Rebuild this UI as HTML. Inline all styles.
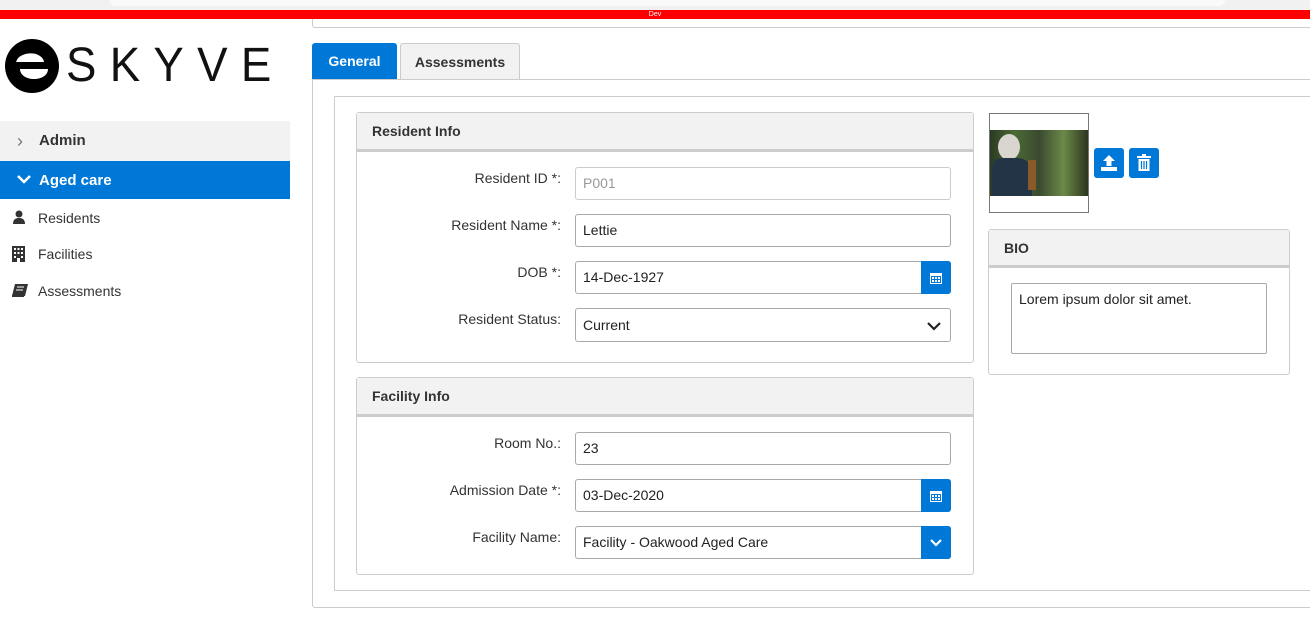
<!DOCTYPE html>
<html><head><meta charset="utf-8"><style>
*{box-sizing:border-box;margin:0;padding:0}
body{width:1310px;height:635px;position:relative;overflow:hidden;background:#fff;font-family:"Liberation Sans",sans-serif;font-size:14px;color:#333}
.a{position:absolute}
.lbl{position:absolute;right:749px;text-align:right;color:#333;font-size:14px}
.inp{position:absolute;left:575px;width:376px;height:33px;border:1px solid #a9a9a9;border-radius:3px;padding:0 7px;line-height:31px;font-size:14px;color:#222;background:#fff}
.btn{position:absolute;right:-1px;top:-1px;width:30px;height:33px;background:#0078d7;border-radius:0 3px 3px 0;display:flex;align-items:center;justify-content:center}
.panel{position:absolute;border:1px solid #ccc;border-radius:3px}
.ph{height:39px;background:#f2f2f2;border-bottom:3px solid #ccc;font-weight:bold;font-size:14px;padding:0 15px;line-height:37px;color:#333}
</style></head><body>
<div class="a" style="left:0;top:0;width:1310px;height:10px;background:#f1f1f1"></div>
<div class="a" style="left:110px;top:0;width:1115px;height:6px;background:#fafafa;border-radius:0 0 6px 6px"></div>
<div class="a" style="left:0;top:10px;width:1310px;height:9px;background:#f00;color:#fff;font-size:7px;line-height:9px;text-align:center">Dev</div>
<div class="a" style="left:312px;top:19px;width:1000px;height:9px;border:1px solid #ccc;border-top:none;border-radius:0 0 3px 3px"></div>

<!-- logo -->
<svg class="a" style="left:4px;top:38px" width="56" height="56" viewBox="0 0 56 56"><circle cx="28" cy="28" r="27" fill="#000"/><path d="M12 26c0-9 12-12 20-10 6 2 8 6 8 8H12z" fill="#fff"/><path d="M16 31h28c0 6-6 10-14 10-8 0-14-4-14-10z" fill="#fff"/><rect x="10" y="26" width="36" height="5" fill="#000"/></svg>
<div class="a" style="left:66px;top:36px;font-size:48px;letter-spacing:14px;font-weight:300;color:#111;line-height:60px;transform:scaleX(.95);transform-origin:left">SKYVE</div>

<div class="a" style="left:0;top:121px;width:290px;height:40px;background:#f2f2f2"></div>
<div class="a" style="left:17px;top:131px;color:#777;font-size:18px;line-height:20px">&#8250;</div>
<div class="a" style="left:39px;top:132px;font-weight:bold;font-size:15px">Admin</div>
<div class="a" style="left:0;top:161px;width:290px;height:38px;background:#0078d7"></div>
<svg class="a" style="left:16px;top:174px" width="16" height="10" viewBox="0 0 16 10"><path d="M2 2l6 6 6-6" stroke="#fff" stroke-width="2.5" fill="none"/></svg>
<div class="a" style="left:39px;top:172px;font-weight:bold;font-size:15px;color:#fff">Aged care</div>
<svg class="a" style="left:12px;top:210px" width="14" height="15" viewBox="0 0 14 15"><circle cx="7" cy="4" r="3.5" fill="#333"/><path d="M1 14c0-5 3-6 6-6s6 1 6 6z" fill="#333"/></svg>
<div class="a" style="left:38px;top:210px">Residents</div>
<svg class="a" style="left:12px;top:246px" width="13" height="16" viewBox="0 0 13 16"><rect width="13" height="16" fill="#333"/><g fill="#fff"><rect x="2" y="2" width="2" height="2"/><rect x="5.5" y="2" width="2" height="2"/><rect x="9" y="2" width="2" height="2"/><rect x="2" y="6" width="2" height="2"/><rect x="5.5" y="6" width="2" height="2"/><rect x="9" y="6" width="2" height="2"/><rect x="2" y="10" width="2" height="2"/><rect x="9" y="10" width="2" height="2"/><rect x="5" y="12" width="3" height="4"/></g></svg>
<div class="a" style="left:38px;top:246px">Facilities</div>
<svg class="a" style="left:11px;top:284px" width="17" height="14" viewBox="0 0 17 14"><path d="M4 0h13l-3 12H1z" fill="#333"/><path d="M1 12h12" stroke="#333" stroke-width="2"/><path d="M6 3h7M5 6h7" stroke="#fff"/></svg>
<div class="a" style="left:38px;top:283px">Assessments</div>

<!-- tabs -->
<div class="a" style="left:312px;top:43px;width:85px;height:37px;background:#0078d7;border-radius:3px 3px 0 0;color:#fff;font-weight:bold;font-size:14px;text-align:center;line-height:37px">General</div>
<div class="a" style="left:400px;top:43px;width:120px;height:37px;background:#f2f2f2;border:1px solid #ccc;border-bottom:1px dotted #333;border-radius:3px 3px 0 0;font-weight:bold;font-size:14px;text-align:center;line-height:36px">Assessments</div>
<div class="a" style="left:312px;top:79px;width:1010px;height:529px;border:1px solid #ccc;border-radius:0 0 3px 3px"></div>
<div class="a" style="left:334px;top:96px;width:990px;height:495px;border:1px solid #ccc"></div>

<!-- resident info -->
<div class="panel" style="left:356px;top:112px;width:618px;height:251px"><div class="ph">Resident Info</div></div>
<div class="lbl" style="top:170px">Resident ID *:</div>
<div class="inp" style="top:167px;color:#999;border-color:#ccc">P001</div>
<div class="lbl" style="top:217px">Resident Name *:</div>
<div class="inp" style="top:214px">Lettie</div>
<div class="lbl" style="top:264px">DOB *:</div>
<div class="inp" style="top:261px">14-Dec-1927<div class="btn"><svg width="12" height="12" viewBox="0 0 12 12"><rect x="0" y="1" width="12" height="11" fill="#fff"/><rect x="1" y="4" width="10" height="7" fill="#0078d7"/><g fill="#fff"><rect x="2" y="5" width="2" height="2"/><rect x="5" y="5" width="2" height="2"/><rect x="8" y="5" width="2" height="2"/><rect x="2" y="8" width="2" height="2"/><rect x="5" y="8" width="2" height="2"/><rect x="8" y="8" width="2" height="2"/></g></svg></div></div>
<div class="lbl" style="top:311px">Resident Status:</div>
<div class="inp" style="top:308px;height:34px;line-height:33px">Current<svg class="a" style="right:8px;top:12px" width="16" height="10" viewBox="0 0 16 10"><path d="M2 2l6 6 6-6" stroke="#222" stroke-width="2.2" fill="none"/></svg></div>

<!-- facility info -->
<div class="panel" style="left:356px;top:377px;width:618px;height:198px"><div class="ph">Facility Info</div></div>
<div class="lbl" style="top:435px">Room No.:</div>
<div class="inp" style="top:432px">23</div>
<div class="lbl" style="top:482px">Admission Date *:</div>
<div class="inp" style="top:479px">03-Dec-2020<div class="btn"><svg width="12" height="12" viewBox="0 0 12 12"><rect x="0" y="1" width="12" height="11" fill="#fff"/><rect x="1" y="4" width="10" height="7" fill="#0078d7"/><g fill="#fff"><rect x="2" y="5" width="2" height="2"/><rect x="5" y="5" width="2" height="2"/><rect x="8" y="5" width="2" height="2"/><rect x="2" y="8" width="2" height="2"/><rect x="5" y="8" width="2" height="2"/><rect x="8" y="8" width="2" height="2"/></g></svg></div></div>
<div class="lbl" style="top:529px">Facility Name:</div>
<div class="inp" style="top:526px">Facility - Oakwood Aged Care<div class="btn"><svg width="14" height="9" viewBox="0 0 14 9"><path d="M2 2l5 5 5-5" stroke="#fff" stroke-width="2.2" fill="none"/></svg></div></div>

<!-- image -->
<div class="a" style="left:989px;top:113px;width:100px;height:100px;border:1px solid #777"></div>
<div class="a" style="left:990px;top:130px;width:98px;height:66px;background:linear-gradient(90deg,#2a3a22 0%,#4c6a35 25%,#3a4a30 50%,#6b8a48 75%,#2c3520 100%)"></div>
<div class="a" style="left:998px;top:134px;width:22px;height:26px;border-radius:50%;background:#d8d6cf"></div>
<div class="a" style="left:992px;top:158px;width:40px;height:38px;background:#243447;border-radius:10px 14px 0 0"></div>
<div class="a" style="left:1028px;top:160px;width:8px;height:30px;background:#8a5a2a"></div>
<div class="a" style="left:1094px;top:148px;width:30px;height:30px;background:#0078d7;border-radius:3px"><svg style="position:absolute;left:7px;top:6px" width="16" height="17" viewBox="0 0 16 17"><path d="M8 1l6 6h-3.5v5h-5v-5H2z" fill="#fff"/><rect x="0" y="13" width="16" height="4" fill="#fff"/></svg></div>
<div class="a" style="left:1129px;top:148px;width:30px;height:30px;background:#0078d7;border-radius:3px"><svg style="position:absolute;left:8px;top:6px" width="14" height="17" viewBox="0 0 14 17"><rect x="0" y="2" width="14" height="2" fill="#fff"/><rect x="5" y="0" width="4" height="2" fill="#fff"/><path d="M1.5 5h11v12h-11z" fill="#fff"/><path d="M4.5 7v8M7 7v8M9.5 7v8" stroke="#0078d7" stroke-width="1.2"/></svg></div>

<!-- bio -->
<div class="panel" style="left:988px;top:229px;width:302px;height:146px"><div class="ph" style="height:38px;line-height:36px">BIO</div></div>
<div class="a" style="left:1011px;top:283px;width:256px;height:71px;border:1px solid #a9a9a9;border-radius:2px;padding:7px;font-size:14px;color:#222">Lorem ipsum dolor sit amet.</div>
</body></html>
